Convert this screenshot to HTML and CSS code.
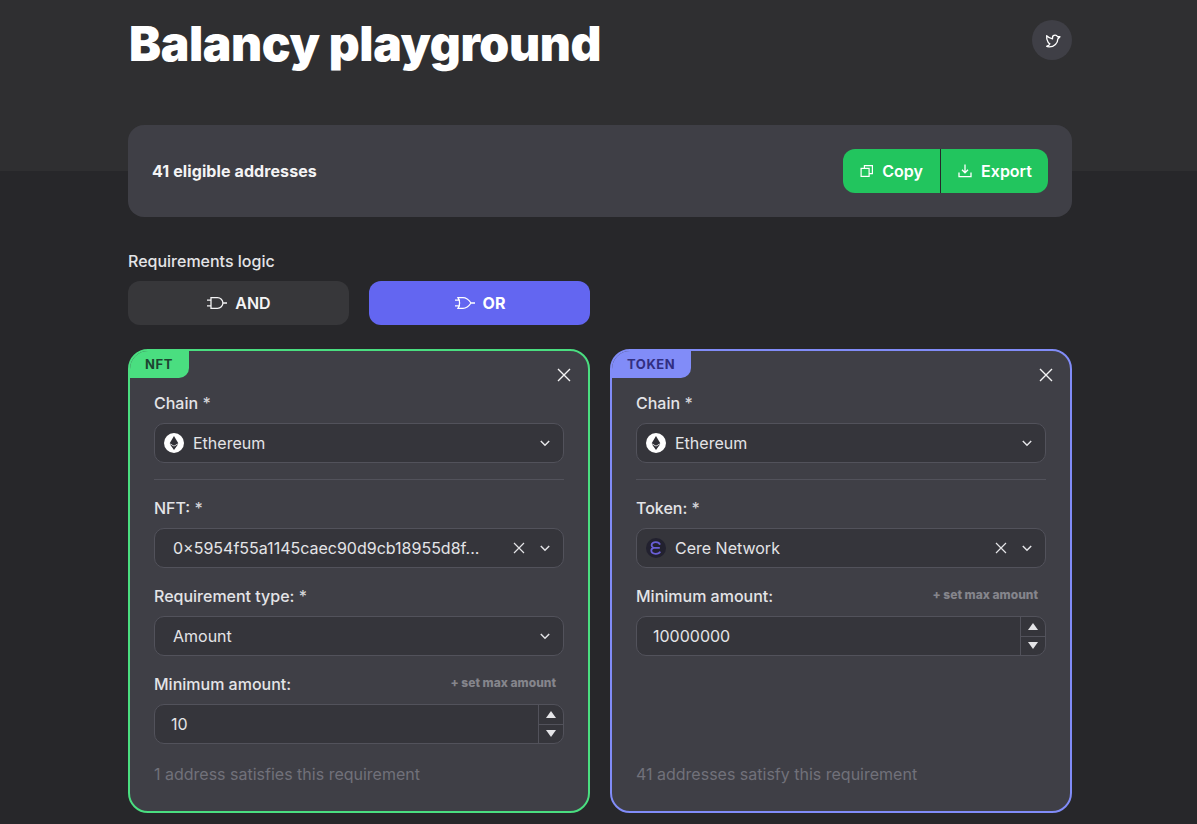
FILE: index.html
```html
<!DOCTYPE html>
<html lang="en">
<head>
<meta charset="utf-8">
<title>Balancy playground</title>
<link rel="stylesheet" href="styles.css">
</head>
<body>
<main class="page">
  <header class="top">
    <h1 class="title">Balancy playground</h1>
    <a class="twitter" aria-label="Twitter">
      <svg width="17" height="17" viewBox="0 0 256 256" fill="none" stroke="currentColor" stroke-width="20" stroke-linejoin="round"><path d="M240 72l-32 32c0 64-54 120-128 120-32 0-40-8-40-8s40-14 48-38c0 0-56-30-48-122 0 0 40 40 88 48V88c0-22 18-40 40-40 16 0 30 10 36 24z"/></svg>
    </a>
  </header>

  <section class="stats">
    <div class="stats-text">41 eligible addresses</div>
    <div class="btn-group">
      <button class="green-btn copy">
        <svg width="14" height="14" viewBox="0 0 14 14" fill="none" stroke="currentColor" stroke-width="1.2"><rect x="1.1" y="4.400" width="8" height="8"/><path d="M4.400 4.400V1.600h8v8H9.100"/></svg>
        Copy
      </button>
      <button class="green-btn export">
        <svg width="16" height="16" viewBox="0 0 16 16" fill="none" stroke="currentColor" stroke-width="1.3"><path d="M8 1.500v8M5 6.800l3 3 3-3"/><path d="M2 9.500v4.200h12V9.500"/></svg>
        Export
      </button>
    </div>
  </section>

  <section class="logic">
    <div class="logic-label">Requirements logic</div>
    <div class="logic-buttons">
      <button class="logic-btn">
        <svg width="22" height="14" viewBox="0 0 22 14" fill="none" stroke="currentColor" stroke-width="1.3"><path d="M1 4.200h4M1 9.800h4M5 1.600h6.500a5.400 5.400 0 0 1 0 10.800H5zM17 7h4"/></svg>
        <span>AND</span>
      </button>
      <button class="logic-btn active">
        <svg width="22" height="14" viewBox="0 0 22 14" fill="none" stroke="currentColor" stroke-width="1.3"><path d="M1 4.200h5M1 9.800h5M4 1.600h5c3.500 0 6 2.400 8 5.400-2 3-4.500 5.400-8 5.400H4c2-3.400 2-7.400 0-10.800zM17 7h4"/></svg>
        <span>OR</span>
      </button>
    </div>
  </section>

  <section class="cards">
    <article class="card nft">
      <span class="tag">NFT</span>
      <button class="close" aria-label="Remove">
        <svg width="14" height="14" viewBox="0 0 14 14" stroke="currentColor" stroke-width="1.400"><path d="M1 1l12 12M13 1L1 13"/></svg>
      </button>
      <div class="field">
        <label class="label">Chain <span class="star">*</span></label>
        <div class="select">
          <svg class="logo" width="20" height="20" viewBox="0 0 20 20"><circle cx="10" cy="10" r="10" fill="#fff"/><path d="M10 3l-4.300 7.200L10 12.700l4.300-2.500z" fill="#2f2f35"/><path d="M5.700 11.100L10 17l4.300-5.900-4.300 2.500z" fill="#2f2f35"/></svg>
          <span class="value">Ethereum</span>
          <svg class="chev" width="12" height="12" viewBox="0 0 12 12" fill="none" stroke="currentColor" stroke-width="1.500"><path d="M1.800 4l4.200 4.200L10.200 4"/></svg>
        </div>
      </div>
      <hr class="divider">
      <div class="field">
        <label class="label">NFT: <span class="star">*</span></label>
        <div class="select plain">
          <span class="value">0×5954f55a1145caec90d9cb18955d8f...</span>
          <svg class="clear" width="12" height="12" viewBox="0 0 12 12" stroke="currentColor" stroke-width="1.200"><path d="M1 1l10 10M11 1L1 11"/></svg>
          <svg class="chev" width="12" height="12" viewBox="0 0 12 12" fill="none" stroke="currentColor" stroke-width="1.500"><path d="M1.800 4l4.200 4.200L10.200 4"/></svg>
        </div>
      </div>
      <div class="field">
        <label class="label">Requirement type: <span class="star">*</span></label>
        <div class="select plain">
          <span class="value">Amount</span>
          <svg class="chev" width="12" height="12" viewBox="0 0 12 12" fill="none" stroke="currentColor" stroke-width="1.500"><path d="M1.800 4l4.200 4.200L10.200 4"/></svg>
        </div>
      </div>
      <div class="field">
        <div class="label-row">
          <label class="label">Minimum amount:</label>
          <span class="set-max">+ set max amount</span>
        </div>
        <div class="number">
          <span class="number-value">10</span>
          <div class="stepper">
            <span class="step"><i class="tri up"></i></span>
            <span class="step"><i class="tri down"></i></span>
          </div>
        </div>
      </div>
      <p class="result">1 address satisfies this requirement</p>
    </article>

    <article class="card token">
      <span class="tag">TOKEN</span>
      <button class="close" aria-label="Remove">
        <svg width="14" height="14" viewBox="0 0 14 14" stroke="currentColor" stroke-width="1.400"><path d="M1 1l12 12M13 1L1 13"/></svg>
      </button>
      <div class="field">
        <label class="label">Chain <span class="star">*</span></label>
        <div class="select">
          <svg class="logo" width="20" height="20" viewBox="0 0 20 20"><circle cx="10" cy="10" r="10" fill="#fff"/><path d="M10 3l-4.300 7.200L10 12.700l4.300-2.500z" fill="#2f2f35"/><path d="M5.700 11.100L10 17l4.300-5.900-4.300 2.500z" fill="#2f2f35"/></svg>
          <span class="value">Ethereum</span>
          <svg class="chev" width="12" height="12" viewBox="0 0 12 12" fill="none" stroke="currentColor" stroke-width="1.500"><path d="M1.800 4l4.200 4.200L10.200 4"/></svg>
        </div>
      </div>
      <hr class="divider">
      <div class="field">
        <label class="label">Token: <span class="star">*</span></label>
        <div class="select">
          <svg class="logo" width="20" height="20" viewBox="0 0 20 20" fill="none"><circle cx="10" cy="10" r="10" fill="#22212f"/><path d="M14 6.600C13.400 4.900 11.800 4.200 9.800 4.200 7.300 4.200 5.600 5.500 5.600 7.300c0 1.200.8 2.100 2 2.600-1.400.4-2.300 1.300-2.300 2.700 0 1.900 1.900 3.200 4.500 3.200 2 0 3.600-.6 4.400-2.200M8 9.900h5.800" stroke="#6a5fd8" stroke-width="1.800"/></svg>
          <span class="value">Cere Network</span>
          <svg class="clear" width="12" height="12" viewBox="0 0 12 12" stroke="currentColor" stroke-width="1.200"><path d="M1 1l10 10M11 1L1 11"/></svg>
          <svg class="chev" width="12" height="12" viewBox="0 0 12 12" fill="none" stroke="currentColor" stroke-width="1.500"><path d="M1.800 4l4.200 4.200L10.200 4"/></svg>
        </div>
      </div>
      <div class="field">
        <div class="label-row">
          <label class="label">Minimum amount:</label>
          <span class="set-max">+ set max amount</span>
        </div>
        <div class="number">
          <span class="number-value">10000000</span>
          <div class="stepper">
            <span class="step"><i class="tri up"></i></span>
            <span class="step"><i class="tri down"></i></span>
          </div>
        </div>
      </div>
      <p class="result">41 addresses satisfy this requirement</p>
    </article>
  </section>
</main>
</body>
</html>
```

FILE: styles.css
```css
* { box-sizing: border-box; }
html, body { margin: 0; padding: 0; }
body {
  height: 824px;
  overflow: hidden;
  font-family: Inter, "Liberation Sans", sans-serif;
  color: #f4f4f5;
  background: linear-gradient(#2f2f31 171px, #27272a 171px);
}
button { font: inherit; color: inherit; border: 0; cursor: pointer; }
.page { width: 944px; margin-left: 128px; }

.top { height: 125px; display: flex; justify-content: space-between; align-items: flex-start; }
.title {
  margin: 12px 0 0 1px;
  font-family: Inter, sans-serif;
  font-weight: 900;
  font-size: 48px;
  line-height: 64px;
  letter-spacing: -0.4px;
  color: #fff;
}
.twitter {
  margin-top: 20px;
  width: 40px; height: 40px;
  border-radius: 50%;
  background: #3f3f46;
  display: flex; align-items: center; justify-content: center;
  color: #fff;
}

.stats {
  height: 92px;
  padding: 0 24px;
  border-radius: 16px;
  background: #3f3f46;
  display: flex; align-items: center; justify-content: space-between;
}
.stats-text { font-weight: 700; font-size: 16px; letter-spacing: 0.1px; }
.btn-group { display: flex; }
.green-btn {
  height: 44px;
  background: #22c55e;
  color: #fff;
  font-weight: 600;
  font-size: 16px;
  display: flex; align-items: center; justify-content: center; gap: 8px;
}
.copy { width: 97px; border-radius: 12px 0 0 12px; }
.export { width: 108px; border-radius: 0 12px 12px 0; border-left: 1px solid #27272a; }

.logic { margin-top: 32px; }
.logic-label { font-weight: 550; font-size: 16px; line-height: 24px; color: #e4e4e7; }
.logic-buttons { margin-top: 8px; display: grid; grid-template-columns: 221px 221px; gap: 20px; }
.logic-btn {
  height: 44px;
  padding: 0 0 1px;
  border-radius: 12px;
  background: #37373a;
  font-weight: 600;
  font-size: 16px;
  display: flex; align-items: center; justify-content: center; gap: 7px;
}
.logic-btn.active { background: #6366f1; color: #fff; font-weight: 700; }

.cards { margin-top: 24px; display: grid; grid-template-columns: 462px 462px; gap: 20px; }
.card {
  position: relative;
  height: 464px;
  padding: 40px 24px 25px;
  border: 2px solid;
  border-radius: 20px;
  background: #3f3f46;
  display: flex; flex-direction: column;
  overflow: hidden;
}
.card.nft { border-color: #4ade80; }
.card.token { border-color: #818cf8; }
.tag {
  position: absolute;
  top: -2px; left: -2px;
  height: 29px;
  padding: 0 16px 0 17px;
  border-bottom-right-radius: 10px;
  font-size: 13px;
  font-weight: 700;
  line-height: 30px;
  letter-spacing: 0.55px;
}
.nft .tag { background: #4ade80; color: #1d4430; min-width: 60px; }
.token .tag { background: #818cf8; color: #312e81; }
.close {
  position: absolute;
  top: 17px; right: 17px;
  padding: 0;
  width: 14px; height: 14px;
  display: flex;
  background: none;
  color: #f4f4f5;
}

.field { display: flex; flex-direction: column; margin-bottom: 16px; }
.label { display: block; font-weight: 550; font-size: 16px; line-height: 24px; color: #e4e4e7; margin-bottom: 8px; }
.star { color: #d4d4d8; }
.label-row { display: flex; justify-content: space-between; align-items: flex-start; }
.set-max { margin-right: 8px; font-size: 12px; font-weight: 800; line-height: 22px; color: #85858c; }

.select, .number {
  height: 40px;
  border: 1px solid #52525b;
  border-radius: 10px;
  background: #35353b;
  display: flex; align-items: center;
  font-size: 16px;
  color: #e4e4e7;
}
.select { padding: 0 12px 0 9px; }
.select.plain { padding-left: 18px; }
.logo { flex: none; margin-right: 9px; }
.value { flex: 1; white-space: nowrap; overflow: hidden; }
.clear { flex: none; margin-right: 14px; }
.chev { flex: none; }

.number { justify-content: space-between; overflow: hidden; }
.number-value { padding-left: 16px; }
.stepper { width: 25px; height: 100%; border-left: 1px solid #52525b; display: flex; flex-direction: column; }
.step { flex: 1; display: flex; align-items: center; justify-content: center; }
.step + .step { border-top: 1px solid #52525b; }
.tri { width: 0; height: 0; border-left: 5.5px solid transparent; border-right: 5.5px solid transparent; }
.tri.up { border-bottom: 7px solid #e4e4e7; }
.tri.down { border-top: 7px solid #e4e4e7; }

.divider { width: 100%; margin: 0 0 16px; border: 0; border-top: 1px solid #52525b; }

.result { margin: auto 0 0; font-size: 16px; line-height: 24px; color: #71717a; }
```
